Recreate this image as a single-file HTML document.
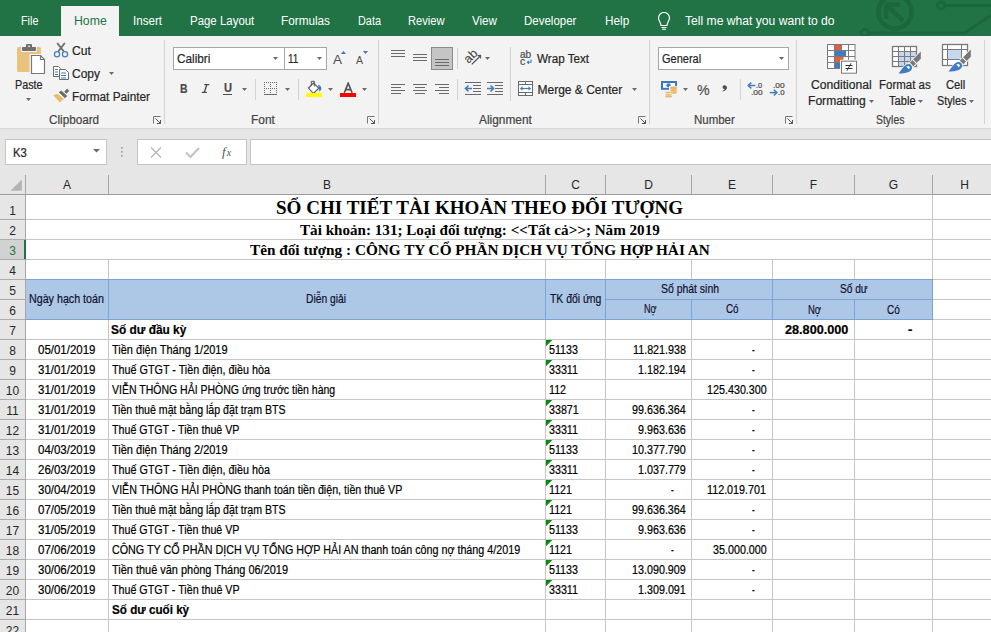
<!DOCTYPE html>
<html><head><meta charset="utf-8">
<style>
*{box-sizing:border-box}
html,body{margin:0;padding:0}
body{width:991px;height:632px;overflow:hidden;position:relative;background:#fff;font-family:"Liberation Sans",sans-serif;color:#262626}
.a{position:absolute}
.t{position:absolute;white-space:nowrap;line-height:1}
.ch{position:absolute;top:175px;height:19px;font-size:12px;color:#262626;text-align:center;line-height:19px}
.rh{position:absolute;left:0;width:25px;font-size:12px;color:#262626;text-align:center}
</style></head><body>
<div class="a" style="left:0px;top:0px;width:991px;height:36px;background:#217346"></div>
<svg class="a" style="left:840px;top:0px" width="151" height="36" viewBox="840 0 151 36"><circle cx="895" cy="12" r="16.5" fill="none" stroke="#1c663d" stroke-width="4.5"/><path d="M886 4.5H900M886 4.5V19M886.5 5L903 21" fill="none" stroke="#1c663d" stroke-width="4.5"/><circle cx="941" cy="5.5" r="3.6" fill="none" stroke="#1c663d" stroke-width="2.6"/><path d="M944.6 5.5H991" stroke="#1c663d" stroke-width="3"/><path d="M868 33H965L991 15" fill="none" stroke="#1c663d" stroke-width="3"/><circle cx="865" cy="33" r="3.6" fill="none" stroke="#1c663d" stroke-width="2.6"/></svg>
<div class="a" style="left:61px;top:6px;width:58px;height:30px;background:#f3f3f3"></div>
<div class="t" style="left:20.70px;top:15px;font-size:12.5px;color:#fff;font-family:'Liberation Sans',sans-serif;transform:scaleX(0.8641);transform-origin:0 0;">File</div>
<div class="t" style="left:73.60px;top:15px;font-size:12.5px;color:#217346;font-family:'Liberation Sans',sans-serif;transform:scaleX(0.9805);transform-origin:0 0;">Home</div>
<div class="t" style="left:132.80px;top:15px;font-size:12.5px;color:#fff;font-family:'Liberation Sans',sans-serif;transform:scaleX(0.9276);transform-origin:0 0;">Insert</div>
<div class="t" style="left:189.60px;top:15px;font-size:12.5px;color:#fff;font-family:'Liberation Sans',sans-serif;transform:scaleX(0.9160);transform-origin:0 0;">Page Layout</div>
<div class="t" style="left:281.00px;top:15px;font-size:12.5px;color:#fff;font-family:'Liberation Sans',sans-serif;transform:scaleX(0.9405);transform-origin:0 0;">Formulas</div>
<div class="t" style="left:357.70px;top:15px;font-size:12.5px;color:#fff;font-family:'Liberation Sans',sans-serif;transform:scaleX(0.8708);transform-origin:0 0;">Data</div>
<div class="t" style="left:408.40px;top:15px;font-size:12.5px;color:#fff;font-family:'Liberation Sans',sans-serif;transform:scaleX(0.8897);transform-origin:0 0;">Review</div>
<div class="t" style="left:471.90px;top:15px;font-size:12.5px;color:#fff;font-family:'Liberation Sans',sans-serif;transform:scaleX(0.9294);transform-origin:0 0;">View</div>
<div class="t" style="left:524.40px;top:15px;font-size:12.5px;color:#fff;font-family:'Liberation Sans',sans-serif;transform:scaleX(0.9197);transform-origin:0 0;">Developer</div>
<div class="t" style="left:604.60px;top:15px;font-size:12.5px;color:#fff;font-family:'Liberation Sans',sans-serif;transform:scaleX(0.9412);transform-origin:0 0;">Help</div>
<div class="t" style="left:684.60px;top:15px;font-size:12.5px;color:#fff;font-family:'Liberation Sans',sans-serif;transform:scaleX(0.9699);transform-origin:0 0;">Tell me what you want to do</div>
<svg class="a" style="left:656px;top:12px" width="16" height="20" viewBox="656 12 16 20"><path d="M661 25.5C661 22.5 658.5 21 658.5 18A5.5 5.5 0 0 1 669.5 18C669.5 21 667 22.5 667 25.5Z" fill="none" stroke="#fff" stroke-width="1.2"/><path d="M661.5 27.5H666.5M662 29.3H666" stroke="#fff" stroke-width="1.1"/></svg>
<div class="a" style="left:0px;top:36px;width:991px;height:92px;background:#f3f3f3"></div>
<div class="a" style="left:0px;top:128px;width:991px;height:1px;background:#d5d5d5"></div>
<div class="a" style="left:164px;top:40px;width:1px;height:84px;background:#d2d2d2"></div>
<div class="a" style="left:378px;top:40px;width:1px;height:84px;background:#d2d2d2"></div>
<div class="a" style="left:649px;top:40px;width:1px;height:84px;background:#d2d2d2"></div>
<div class="a" style="left:796px;top:40px;width:1px;height:84px;background:#d2d2d2"></div>
<div class="a" style="left:984px;top:40px;width:1px;height:84px;background:#d2d2d2"></div>
<div class="t" style="left:48.50px;top:114px;font-size:12px;color:#444;font-family:'Liberation Sans',sans-serif;transform:scaleX(0.9755);transform-origin:0 0;-webkit-text-stroke:0.2px #444;">Clipboard</div>
<div class="t" style="left:251.00px;top:114px;font-size:12px;color:#444;font-family:'Liberation Sans',sans-serif;transform:scaleX(0.9912);transform-origin:0 0;-webkit-text-stroke:0.2px #444;">Font</div>
<div class="t" style="left:479.00px;top:114px;font-size:12px;color:#444;font-family:'Liberation Sans',sans-serif;transform:scaleX(0.9894);transform-origin:0 0;-webkit-text-stroke:0.2px #444;">Alignment</div>
<div class="t" style="left:694.20px;top:114px;font-size:12px;color:#444;font-family:'Liberation Sans',sans-serif;transform:scaleX(0.9559);transform-origin:0 0;-webkit-text-stroke:0.2px #444;">Number</div>
<div class="t" style="left:876.00px;top:114px;font-size:12px;color:#444;font-family:'Liberation Sans',sans-serif;transform:scaleX(0.8691);transform-origin:0 0;-webkit-text-stroke:0.2px #444;">Styles</div>
<svg class="a" style="left:153px;top:116px" width="9" height="9" viewBox="153 116 9 9"><path d="M153.5 123.5V116.5H160.5" fill="none" stroke="#777" stroke-width="1"/><path d="M155.5 118.5L160.5 123.5M157 123.5H160.5V120" fill="none" stroke="#555" stroke-width="1"/></svg>
<svg class="a" style="left:367px;top:116px" width="9" height="9" viewBox="367 116 9 9"><path d="M367.5 123.5V116.5H374.5" fill="none" stroke="#777" stroke-width="1"/><path d="M369.5 118.5L374.5 123.5M371 123.5H374.5V120" fill="none" stroke="#555" stroke-width="1"/></svg>
<svg class="a" style="left:638px;top:116px" width="9" height="9" viewBox="638 116 9 9"><path d="M638.5 123.5V116.5H645.5" fill="none" stroke="#777" stroke-width="1"/><path d="M640.5 118.5L645.5 123.5M642 123.5H645.5V120" fill="none" stroke="#555" stroke-width="1"/></svg>
<svg class="a" style="left:785px;top:116px" width="9" height="9" viewBox="785 116 9 9"><path d="M785.5 123.5V116.5H792.5" fill="none" stroke="#777" stroke-width="1"/><path d="M787.5 118.5L792.5 123.5M789 123.5H792.5V120" fill="none" stroke="#555" stroke-width="1"/></svg>
<svg class="a" style="left:14px;top:40px" width="34" height="38" viewBox="14 40 34 38"><rect x="17" y="47" width="24" height="25" rx="1.5" fill="#eac27f"/><rect x="21" y="46" width="16" height="6" fill="#f3f3f3"/><rect x="22" y="47" width="14" height="4" rx="0.8" fill="#6f6f6f"/><rect x="26" y="44" width="6" height="4" rx="1" fill="#6f6f6f"/><rect x="28.2" y="45.5" width="1.6" height="1.6" fill="#f3f3f3"/><path d="M29.5 54H41L47 60V75H29.5Z" fill="#f3f3f3"/><path d="M31.5 55.5H40.5L44.5 59.5V73.5H31.5Z" fill="#fff" stroke="#787878" stroke-width="1.2"/><path d="M40.5 55.5V59.5H44.5" fill="none" stroke="#787878" stroke-width="1.2"/></svg>
<div class="t" style="left:15.40px;top:79px;font-size:12px;color:#262626;font-family:'Liberation Sans',sans-serif;transform:scaleX(0.8995);transform-origin:0 0;-webkit-text-stroke:0.2px #262626;">Paste</div>
<svg class="a" style="left:26px;top:98px" width="6" height="4"><path d="M0 0H5L2.5 3Z" fill="#6a6a6a"/></svg>
<svg class="a" style="left:52px;top:41px" width="18" height="17" viewBox="52 41 18 17"><path d="M57.2 43L63.8 51.5M64.8 43L58.2 51.5" stroke="#6a6a6a" stroke-width="1.8"/><circle cx="57" cy="54.2" r="2.6" fill="none" stroke="#4a7fc1" stroke-width="1.3"/><circle cx="65" cy="54.2" r="2.6" fill="none" stroke="#4a7fc1" stroke-width="1.3"/></svg>
<div class="t" style="left:72.00px;top:45px;font-size:12px;color:#262626;font-family:'Liberation Sans',sans-serif;transform:scaleX(1.0122);transform-origin:0 0;-webkit-text-stroke:0.2px #262626;">Cut</div>
<svg class="a" style="left:51px;top:64px" width="20" height="18" viewBox="51 64 20 18"><path d="M53.5 66.5H58.5L60.5 68.5V76.5H53.5Z" fill="#fff" stroke="#6d6d6d" stroke-width="1"/><path d="M55 69.5H58M55 72H58M55 74.5H58" stroke="#3f7bc0" stroke-width="1"/><path d="M59.5 69.5H65.5L68.5 72.5V79.5H59.5Z" fill="#fff" stroke="#6d6d6d" stroke-width="1"/><path d="M61 73H66M61 75.5H66M61 78H66" stroke="#3f7bc0" stroke-width="1"/></svg>
<div class="t" style="left:72.00px;top:68px;font-size:12px;color:#262626;font-family:'Liberation Sans',sans-serif;-webkit-text-stroke:0.2px #262626;">Copy</div>
<svg class="a" style="left:109px;top:72px" width="6" height="4"><path d="M0 0H5L2.5 3Z" fill="#6a6a6a"/></svg>
<svg class="a" style="left:51px;top:87px" width="20" height="18" viewBox="51 87 20 18"><path d="M53.2 95.3L57.6 93.8L63.8 98.8L60 102.6Z" fill="#e8bd6e"/><path d="M59.2 92.3L61.4 91.1L66.8 96.1L64.9 97.7Z" fill="#6a6a6a" stroke="#6a6a6a" stroke-width="0.8" stroke-linejoin="round"/><path d="M64.6 91.7L67.1 89L69 90.7L66.5 93.4Z" fill="#6a6a6a" stroke="#6a6a6a" stroke-width="0.6" stroke-linejoin="round"/></svg>
<div class="t" style="left:72.00px;top:91px;font-size:12px;color:#262626;font-family:'Liberation Sans',sans-serif;transform:scaleX(0.9829);transform-origin:0 0;-webkit-text-stroke:0.2px #262626;">Format Painter</div>
<div class="a" style="left:173px;top:47px;width:112px;height:23px;background:#fff;border:1px solid #a6a6a6"></div>
<div class="a" style="left:284px;top:47px;width:43px;height:23px;background:#fff;border:1px solid #a6a6a6"></div>
<div class="t" style="left:176.60px;top:53px;font-size:12px;color:#262626;font-family:'Liberation Sans',sans-serif;transform:scaleX(0.9821);transform-origin:0 0;-webkit-text-stroke:0.2px #262626;">Calibri</div>
<div class="t" style="left:287.60px;top:53px;font-size:12px;color:#262626;font-family:'Liberation Sans',sans-serif;transform:scaleX(0.8349);transform-origin:0 0;-webkit-text-stroke:0.2px #262626;">11</div>
<svg class="a" style="left:273px;top:57px" width="6" height="4"><path d="M0 0H5L2.5 3Z" fill="#6a6a6a"/></svg>
<svg class="a" style="left:316.5px;top:57px" width="6" height="4"><path d="M0 0H5L2.5 3Z" fill="#6a6a6a"/></svg>
<div class="t" style="left:333px;top:52.52px;font-size:13.5px;color:#505050;">A</div>
<svg class="a" style="left:340px;top:50px" width="8" height="5" viewBox="340 50 8 5"><path d="M341 54H346L343.5 51Z" fill="#3c78b9"/></svg>
<div class="t" style="left:356px;top:55.08px;font-size:10.5px;color:#505050;">A</div>
<svg class="a" style="left:362px;top:50px" width="8" height="5" viewBox="362 50 8 5"><path d="M363 51H368L365.5 54Z" fill="#3c78b9"/></svg>
<div class="t" style="left:179.70px;top:82px;font-size:13px;color:#4a4a4a;font-family:'Liberation Sans',sans-serif;font-weight:bold;transform:scaleX(0.7991);transform-origin:0 0;-webkit-text-stroke:0.2px #4a4a4a;">B</div>
<svg class="a" style="left:200px;top:82px" width="12" height="13" viewBox="200 82 12 13"><path d="M204.3 84.6H209.3M201.8 92.4H206.8M206.8 84.6L204.3 92.4" fill="none" stroke="#4a4a4a" stroke-width="1.4"/></svg>
<div class="t" style="left:223.50px;top:82px;font-size:12px;color:#4a4a4a;font-family:'Liberation Sans',sans-serif;font-weight:bold;transform:scaleX(0.9234);transform-origin:0 0;-webkit-text-stroke:0.2px #4a4a4a;">U</div>
<div class="a" style="left:223px;top:94px;width:9px;height:1px;background:#4a4a4a"></div>
<svg class="a" style="left:242px;top:88px" width="6" height="4"><path d="M0 0H5L2.5 3Z" fill="#6a6a6a"/></svg>
<div class="a" style="left:255px;top:79px;width:1px;height:21px;background:#d2d2d2"></div>
<svg class="a" style="left:263px;top:80px" width="16" height="16" viewBox="263 80 16 16"><g fill="#6a6a6a"><rect x="264" y="82" width="1" height="1"/><rect x="264" y="88" width="1" height="1"/><rect x="266" y="82" width="1" height="1"/><rect x="266" y="88" width="1" height="1"/><rect x="268" y="82" width="1" height="1"/><rect x="268" y="88" width="1" height="1"/><rect x="270" y="82" width="1" height="1"/><rect x="270" y="88" width="1" height="1"/><rect x="272" y="82" width="1" height="1"/><rect x="272" y="88" width="1" height="1"/><rect x="274" y="82" width="1" height="1"/><rect x="274" y="88" width="1" height="1"/><rect x="276" y="82" width="1" height="1"/><rect x="276" y="88" width="1" height="1"/><rect x="264" y="82" width="1" height="1"/><rect x="270" y="82" width="1" height="1"/><rect x="276" y="82" width="1" height="1"/><rect x="264" y="84" width="1" height="1"/><rect x="270" y="84" width="1" height="1"/><rect x="276" y="84" width="1" height="1"/><rect x="264" y="86" width="1" height="1"/><rect x="270" y="86" width="1" height="1"/><rect x="276" y="86" width="1" height="1"/><rect x="264" y="88" width="1" height="1"/><rect x="270" y="88" width="1" height="1"/><rect x="276" y="88" width="1" height="1"/><rect x="264" y="90" width="1" height="1"/><rect x="270" y="90" width="1" height="1"/><rect x="276" y="90" width="1" height="1"/><rect x="264" y="92" width="1" height="1"/><rect x="270" y="92" width="1" height="1"/><rect x="276" y="92" width="1" height="1"/></g><rect x="264" y="94" width="13" height="1" fill="#6a6a6a"/></svg>
<svg class="a" style="left:285px;top:88px" width="6" height="4"><path d="M0 0H5L2.5 3Z" fill="#6a6a6a"/></svg>
<div class="a" style="left:298px;top:79px;width:1px;height:21px;background:#d2d2d2"></div>
<svg class="a" style="left:304px;top:79px" width="20" height="19" viewBox="304 79 20 19"><path d="M308.5 88L313.5 83L318.8 88.2L313.5 93.5Z" fill="#fff" stroke="#555" stroke-width="1.1"/><path d="M311.3 85.2V81.3H314.3V86.5" fill="none" stroke="#555" stroke-width="1"/><path d="M318 84.8Q322 85.8 321.2 89.5L319.5 92L318.8 88.2Z" fill="#3f7bc0"/><rect x="306" y="93" width="16" height="4" fill="#ffff00"/></svg>
<svg class="a" style="left:328px;top:88px" width="6" height="4"><path d="M0 0H5L2.5 3Z" fill="#6a6a6a"/></svg>
<svg class="a" style="left:342px;top:82px" width="12" height="12" viewBox="342 82 12 12"><path d="M344.3 92.8L348.2 83.3L352.1 92.8M345.7 89.6H350.7" fill="none" stroke="#555" stroke-width="1.7"/></svg>
<div class="a" style="left:340px;top:93px;width:16px;height:4px;background:#ff0000"></div>
<svg class="a" style="left:362px;top:88px" width="6" height="4"><path d="M0 0H5L2.5 3Z" fill="#6a6a6a"/></svg>
<div class="a" style="left:431px;top:47px;width:22px;height:23px;background:#c5c5c5;border:1px solid #8a8a8a"></div>
<svg class="a" style="left:385px;top:40px" width="125" height="60" viewBox="385 40 125 60"><path d="M391 50.5H405" stroke="#6a6a6a" stroke-width="1"/><path d="M391 53.5H405" stroke="#6a6a6a" stroke-width="1"/><path d="M391 56.5H405" stroke="#6a6a6a" stroke-width="1"/><path d="M413 54.5H427" stroke="#6a6a6a" stroke-width="1"/><path d="M413 57.5H427" stroke="#6a6a6a" stroke-width="1"/><path d="M413 60.5H427" stroke="#6a6a6a" stroke-width="1"/><path d="M435 59.5H449" stroke="#6a6a6a" stroke-width="1"/><path d="M435 62.5H449" stroke="#6a6a6a" stroke-width="1"/><path d="M435 65.5H449" stroke="#6a6a6a" stroke-width="1"/><path d="M391 84.5H405" stroke="#6a6a6a" stroke-width="1"/><path d="M413 84.5H427" stroke="#6a6a6a" stroke-width="1"/><path d="M435 84.5H449" stroke="#6a6a6a" stroke-width="1"/><path d="M391 87.5H401" stroke="#6a6a6a" stroke-width="1"/><path d="M415 87.5H425" stroke="#6a6a6a" stroke-width="1"/><path d="M439 87.5H449" stroke="#6a6a6a" stroke-width="1"/><path d="M391 90.5H405" stroke="#6a6a6a" stroke-width="1"/><path d="M413 90.5H427" stroke="#6a6a6a" stroke-width="1"/><path d="M435 90.5H449" stroke="#6a6a6a" stroke-width="1"/><path d="M391 93.5H401" stroke="#6a6a6a" stroke-width="1"/><path d="M415 93.5H425" stroke="#6a6a6a" stroke-width="1"/><path d="M439 93.5H449" stroke="#6a6a6a" stroke-width="1"/><path d="M465 82.5H481" stroke="#6a6a6a" stroke-width="1"/><path d="M465 94.5H481" stroke="#6a6a6a" stroke-width="1"/><path d="M473 85.5H481" stroke="#6a6a6a" stroke-width="1"/><path d="M473 88.5H481" stroke="#6a6a6a" stroke-width="1"/><path d="M473 91.5H481" stroke="#6a6a6a" stroke-width="1"/><path d="M487 82.5H503" stroke="#6a6a6a" stroke-width="1"/><path d="M487 94.5H503" stroke="#6a6a6a" stroke-width="1"/><path d="M495 85.5H503" stroke="#6a6a6a" stroke-width="1"/><path d="M495 88.5H503" stroke="#6a6a6a" stroke-width="1"/><path d="M495 91.5H503" stroke="#6a6a6a" stroke-width="1"/><path d="M465.5 88.5H472M468.5 85.5L465.5 88.5L468.5 91.5" fill="none" stroke="#3f7bc0" stroke-width="1.6"/><path d="M487 88.5H493.5M490.5 85.5L493.5 88.5L490.5 91.5" fill="none" stroke="#3f7bc0" stroke-width="1.6"/></svg>
<div class="a" style="left:457px;top:48px;width:1px;height:21px;background:#d2d2d2"></div>
<div class="a" style="left:457px;top:79px;width:1px;height:21px;background:#d2d2d2"></div>
<div class="a" style="left:510px;top:47px;width:1px;height:54px;background:#d2d2d2"></div>
<div class="t" style="left:462.5px;top:50px;width:16px;height:13px;font-size:12.5px;color:#444;transform:rotate(-45deg);transform-origin:8px 6.5px;text-align:center">ab</div>
<svg class="a" style="left:468px;top:52px" width="16" height="16" viewBox="468 52 16 16"><path d="M471.8 64.4L479 57.2" fill="none" stroke="#555" stroke-width="1.3"/><path d="M481.2 54.8L481 59L477 55Z" fill="#555"/></svg>
<svg class="a" style="left:485px;top:57px" width="6" height="4"><path d="M0 0H5L2.5 3Z" fill="#6a6a6a"/></svg>
<div class="t" style="left:519.80px;top:49px;font-size:10.5px;color:#4a4a4a;font-family:'Liberation Sans',sans-serif;transform:scaleX(0.9592);transform-origin:0 0;-webkit-text-stroke:0.2px #4a4a4a;">ab</div>
<div class="t" style="left:520.10px;top:56px;font-size:10.5px;color:#4a4a4a;font-family:'Liberation Sans',sans-serif;transform:scaleX(0.9905);transform-origin:0 0;-webkit-text-stroke:0.2px #4a4a4a;">c</div>
<svg class="a" style="left:525px;top:58px" width="8" height="7" viewBox="525 58 8 7"><path d="M531 59.5V62.3H527.5M529 60.8L527.3 62.3L529 63.8" fill="none" stroke="#3f7bc0" stroke-width="1.1"/></svg>
<div class="t" style="left:537.00px;top:53px;font-size:12px;color:#262626;font-family:'Liberation Sans',sans-serif;transform:scaleX(0.9705);transform-origin:0 0;-webkit-text-stroke:0.2px #262626;">Wrap Text</div>
<svg class="a" style="left:516px;top:80px" width="19" height="18" viewBox="516 80 19 18"><rect x="518.5" y="81.5" width="14" height="14" fill="#fff" stroke="#6a6a6a" stroke-width="1"/><path d="M518.5 84.5H532.5M518.5 92.5H532.5M525.5 81.5V84.5M525.5 92.5V95.5" stroke="#6a6a6a" stroke-width="1"/><path d="M520.5 88.5H530.5" stroke="#3f7bc0" stroke-width="1.2"/><path d="M520 88.5L522.5 86.3V90.7Z M531 88.5L528.5 86.3V90.7Z" fill="#3f7bc0"/></svg>
<div class="t" style="left:537.50px;top:84px;font-size:12px;color:#262626;font-family:'Liberation Sans',sans-serif;-webkit-text-stroke:0.2px #262626;">Merge &amp; Center</div>
<svg class="a" style="left:632px;top:88px" width="6" height="4"><path d="M0 0H5L2.5 3Z" fill="#6a6a6a"/></svg>
<div class="a" style="left:658px;top:47px;width:131px;height:23px;background:#fff;border:1px solid #a6a6a6"></div>
<div class="t" style="left:661.60px;top:53px;font-size:12px;color:#262626;font-family:'Liberation Sans',sans-serif;transform:scaleX(0.9158);transform-origin:0 0;-webkit-text-stroke:0.2px #262626;">General</div>
<svg class="a" style="left:779px;top:57px" width="6" height="4"><path d="M0 0H5L2.5 3Z" fill="#6a6a6a"/></svg>
<svg class="a" style="left:659px;top:79px" width="22" height="20" viewBox="659 79 22 20"><rect x="662" y="82" width="14" height="6.8" fill="#fff" stroke="#3a78bd" stroke-width="2"/><circle cx="668.5" cy="85.3" r="2.1" fill="#3a78bd"/><path d="M669 86H678V98H663V90.5H669Z" fill="#f3f3f3"/><ellipse cx="673.6" cy="87.9" rx="3.6" ry="1.3" fill="#e8b86d"/><ellipse cx="673.6" cy="90.2" rx="3.6" ry="1.3" fill="#e8b86d"/><ellipse cx="673.6" cy="92.5" rx="3.6" ry="1.3" fill="#e8b86d"/><ellipse cx="668.6" cy="92.6" rx="3.6" ry="1.3" fill="#e8b86d" stroke="#f3f3f3" stroke-width="0.7"/><ellipse cx="668.6" cy="94.9" rx="3.6" ry="1.3" fill="#e8b86d" stroke="#f3f3f3" stroke-width="0.7"/><ellipse cx="668.6" cy="96.6" rx="3.4" ry="1" fill="#e8b86d"/></svg>
<svg class="a" style="left:683px;top:88px" width="6" height="4"><path d="M0 0H5L2.5 3Z" fill="#6a6a6a"/></svg>
<div class="t" style="left:697.20px;top:82px;font-size:15px;color:#505050;font-family:'Liberation Sans',sans-serif;transform:scaleX(0.9449);transform-origin:0 0;-webkit-text-stroke:0.2px #505050;">%</div>
<svg class="a" style="left:720px;top:84px" width="9" height="9" viewBox="720 84 9 9"><path d="M724.2 85.3C726 85.3 727 86.3 727 87.6C727 89.6 725.3 91.2 722.6 91.6L722.4 90.8C723.8 90.3 724.6 89.6 724.6 89C723.4 89 722.6 88.3 722.6 87.2C722.6 86.1 723.3 85.3 724.2 85.3Z" fill="#505050"/></svg>
<div class="a" style="left:740px;top:79px;width:1px;height:21px;background:#d2d2d2"></div>
<div class="t" style="left:756.00px;top:82px;font-size:8px;color:#444;font-family:'Liberation Sans',sans-serif;transform:scaleX(0.9143);transform-origin:0 0;-webkit-text-stroke:0.2px #444;">.0</div>
<div class="t" style="left:750.60px;top:89px;font-size:8px;color:#444;font-family:'Liberation Sans',sans-serif;transform:scaleX(1.0342);transform-origin:0 0;-webkit-text-stroke:0.2px #444;">.00</div>
<svg class="a" style="left:747px;top:82px" width="10" height="8" viewBox="747 82 10 8"><path d="M748.5 85.5H755.3" stroke="#3f7bc0" stroke-width="1.5"/><path d="M751.3 82.6L748.2 85.5L751.3 88.4" fill="none" stroke="#3f7bc0" stroke-width="1.5"/></svg>
<div class="t" style="left:772.50px;top:82px;font-size:8px;color:#444;font-family:'Liberation Sans',sans-serif;transform:scaleX(1.0432);transform-origin:0 0;-webkit-text-stroke:0.2px #444;">.00</div>
<div class="t" style="left:777.60px;top:89px;font-size:8px;color:#444;font-family:'Liberation Sans',sans-serif;transform:scaleX(0.9742);transform-origin:0 0;-webkit-text-stroke:0.2px #444;">.0</div>
<svg class="a" style="left:769px;top:89px" width="10" height="8" viewBox="769 89 10 8"><path d="M769.8 92.6H776.4" stroke="#3f7bc0" stroke-width="1.5"/><path d="M773.9 89.7L776.9 92.6L773.9 95.5" fill="none" stroke="#3f7bc0" stroke-width="1.5"/></svg>
<svg class="a" style="left:825px;top:42px" width="35" height="34" viewBox="825 42 35 34"><rect x="827.5" y="44.5" width="27.5" height="24" fill="#fff" stroke="#7a7a7a"/><path d="M834.5 44.5V68.5M841.5 44.5V68.5M848.5 44.5V68.5M827.5 50.5H855M827.5 56.5H855M827.5 62.5H855" stroke="#7a7a7a" stroke-width="1"/><rect x="835" y="45" width="6" height="5" fill="#e0603c"/><rect x="835" y="51" width="11" height="5" fill="#3f7bc0"/><rect x="835" y="57" width="8.5" height="5" fill="#e0603c"/><rect x="835" y="63" width="6" height="5" fill="#3f7bc0"/><rect x="840" y="59.7" width="18" height="15" fill="#f3f3f3"/><rect x="841.5" y="61.2" width="15" height="12" fill="#fff" stroke="#7a7a7a"/><path d="M845.5 65.5H852.5M845.5 68.5H852.5M851 63.3L847 70.7" stroke="#333" stroke-width="1"/></svg>
<svg class="a" style="left:888px;top:42px" width="38" height="34" viewBox="888 42 38 34"><rect x="892.5" y="46.5" width="24" height="20" fill="#fff" stroke="#7a7a7a"/><rect x="898.5" y="51.5" width="18" height="15" fill="#c5d8ef"/><path d="M898.5 46.5V66.5M904.5 46.5V66.5M910.5 46.5V66.5M892.5 51.5H916.5M892.5 56.5H916.5M892.5 61.5H916.5" stroke="#7a7a7a" stroke-width="1"/><rect x="892.5" y="46.5" width="24" height="20" fill="none" stroke="#7a7a7a" stroke-width="1.3"/><path d="M920.80 51.50L920.80 58.80L913.30 66.30L909.80 62.80Z" fill="#777" stroke="#f3f3f3" stroke-width="1.6" paint-order="stroke"/><path d="M912.20 59.20L917.20 64.20" stroke="#f3f3f3" stroke-width="1.1"/><path d="M898.60 73.60C901.00 70.50 903.50 66.50 906.30 64.60C909.30 62.80 912.40 64.80 912.00 68.20C911.60 71.60 906.00 73.60 898.60 73.60Z" fill="#3f7bc0" stroke="#f3f3f3" stroke-width="1.4" paint-order="stroke"/><path d="M906.30 66.60C907.50 65.50 909.50 65.60 910.00 67.60L908.80 69.30Z" fill="#fff"/></svg>
<svg class="a" style="left:938px;top:40px" width="38" height="34" viewBox="938 40 38 34"><rect x="942.5" y="44.5" width="25" height="21" fill="#fff" stroke="#7a7a7a"/><rect x="948" y="50" width="13.5" height="9.5" fill="#c5d8ef"/><path d="M942.5 49.5H967.5M942.5 59.5H967.5M947.5 44.5V65.5M961.5 44.5V65.5" stroke="#7a7a7a" stroke-width="1"/><rect x="942.5" y="44.5" width="25" height="21" fill="none" stroke="#7a7a7a" stroke-width="1.3"/><path d="M970.80 49.50L970.80 56.80L963.30 64.30L959.80 60.80Z" fill="#777" stroke="#f3f3f3" stroke-width="1.6" paint-order="stroke"/><path d="M962.20 57.20L967.20 62.20" stroke="#f3f3f3" stroke-width="1.1"/><path d="M948.60 71.60C951.00 68.50 953.50 64.50 956.30 62.60C959.30 60.80 962.40 62.80 962.00 66.20C961.60 69.60 956.00 71.60 948.60 71.60Z" fill="#3f7bc0" stroke="#f3f3f3" stroke-width="1.4" paint-order="stroke"/><path d="M956.30 64.60C957.50 63.50 959.50 63.60 960.00 65.60L958.80 67.30Z" fill="#fff"/></svg>
<div class="t" style="left:810.60px;top:79px;font-size:12px;color:#262626;font-family:'Liberation Sans',sans-serif;transform:scaleX(1.0111);transform-origin:0 0;-webkit-text-stroke:0.2px #262626;">Conditional</div>
<div class="t" style="left:807.70px;top:95px;font-size:12px;color:#262626;font-family:'Liberation Sans',sans-serif;transform:scaleX(1.0079);transform-origin:0 0;-webkit-text-stroke:0.2px #262626;">Formatting</div>
<svg class="a" style="left:869px;top:99.5px" width="6" height="4"><path d="M0 0H5L2.5 3Z" fill="#6a6a6a"/></svg>
<div class="t" style="left:879.40px;top:79px;font-size:12px;color:#262626;font-family:'Liberation Sans',sans-serif;transform:scaleX(0.9572);transform-origin:0 0;-webkit-text-stroke:0.2px #262626;">Format as</div>
<div class="t" style="left:888.70px;top:95px;font-size:12px;color:#262626;font-family:'Liberation Sans',sans-serif;transform:scaleX(0.9271);transform-origin:0 0;-webkit-text-stroke:0.2px #262626;">Table</div>
<svg class="a" style="left:918.3px;top:99.5px" width="6" height="4"><path d="M0 0H5L2.5 3Z" fill="#6a6a6a"/></svg>
<div class="t" style="left:945.50px;top:79px;font-size:12px;color:#262626;font-family:'Liberation Sans',sans-serif;transform:scaleX(0.9334);transform-origin:0 0;-webkit-text-stroke:0.2px #262626;">Cell</div>
<div class="t" style="left:936.50px;top:95px;font-size:12px;color:#262626;font-family:'Liberation Sans',sans-serif;transform:scaleX(0.8967);transform-origin:0 0;-webkit-text-stroke:0.2px #262626;">Styles</div>
<svg class="a" style="left:969px;top:99.5px" width="6" height="4"><path d="M0 0H5L2.5 3Z" fill="#6a6a6a"/></svg>
<div class="a" style="left:0px;top:129px;width:991px;height:46px;background:#e6e6e6"></div>
<div class="a" style="left:5px;top:139px;width:102px;height:26px;background:#fff;border:1px solid #c6c6c6"></div>
<div class="t" style="left:12.50px;top:147px;font-size:12px;color:#262626;font-family:'Liberation Sans',sans-serif;transform:scaleX(0.9471);transform-origin:0 0;-webkit-text-stroke:0.2px #262626;">K3</div>
<svg class="a" style="left:92px;top:148px" width="9" height="6" viewBox="92 148 9 6"><path d="M93 149H100L96.5 152.5Z" fill="#6a6a6a"/></svg>
<svg class="a" style="left:120px;top:146px" width="4" height="12" viewBox="120 146 4 12"><rect x="121" y="147" width="1.6" height="1.6" fill="#9a9a9a"/><rect x="121" y="151" width="1.6" height="1.6" fill="#9a9a9a"/><rect x="121" y="155" width="1.6" height="1.6" fill="#9a9a9a"/></svg>
<div class="a" style="left:137px;top:139px;width:110px;height:26px;background:#fff;border:1px solid #c6c6c6"></div>
<svg class="a" style="left:148px;top:145px" width="54" height="14" viewBox="148 145 54 14"><path d="M151 147.5L161 157.5M161 147.5L151 157.5" stroke="#b5b5b5" stroke-width="1.3"/><path d="M186 152.5L190.5 157L199 148" fill="none" stroke="#c2c2c2" stroke-width="2"/></svg>
<div class="t" style="left:222px;top:144.95px;font-size:13px;color:#555;font-family:'Liberation Serif',serif;font-style:italic">f</div>
<div class="t" style="left:226.8px;top:147.50px;font-size:10px;color:#555;font-family:'Liberation Serif',serif;font-style:italic">x</div>
<div class="a" style="left:250px;top:139px;width:745px;height:26px;background:#fff;border:1px solid #c6c6c6"></div>
<div class="a" style="left:0px;top:175px;width:991px;height:457px;background:#fff"></div>
<div class="a" style="left:0px;top:175px;width:991px;height:19px;background:#e6e6e6"></div>
<svg class="a" style="left:0;top:175px" width="25" height="19"><path d="M10.5 15.7 L21.8 4.6 L21.8 15.7 Z" fill="#b4b4b4"/></svg>
<div class="ch" style="left:26px;width:82px;top:179px;line-height:1;height:auto">A</div>
<div class="ch" style="left:109px;width:436px;top:179px;line-height:1;height:auto">B</div>
<div class="ch" style="left:546px;width:59px;top:179px;line-height:1;height:auto">C</div>
<div class="ch" style="left:606px;width:85px;top:179px;line-height:1;height:auto">D</div>
<div class="ch" style="left:692px;width:80px;top:179px;line-height:1;height:auto">E</div>
<div class="ch" style="left:773px;width:81px;top:179px;line-height:1;height:auto">F</div>
<div class="ch" style="left:855px;width:77px;top:179px;line-height:1;height:auto">G</div>
<div class="ch" style="left:933px;width:63px;top:179px;line-height:1;height:auto">H</div>
<div class="a" style="left:25px;top:175px;width:1px;height:19px;background:#a6a6a6"></div>
<div class="a" style="left:108px;top:175px;width:1px;height:19px;background:#a6a6a6"></div>
<div class="a" style="left:545px;top:175px;width:1px;height:19px;background:#a6a6a6"></div>
<div class="a" style="left:605px;top:175px;width:1px;height:19px;background:#a6a6a6"></div>
<div class="a" style="left:691px;top:175px;width:1px;height:19px;background:#a6a6a6"></div>
<div class="a" style="left:772px;top:175px;width:1px;height:19px;background:#a6a6a6"></div>
<div class="a" style="left:854px;top:175px;width:1px;height:19px;background:#a6a6a6"></div>
<div class="a" style="left:932px;top:175px;width:1px;height:19px;background:#a6a6a6"></div>
<div class="a" style="left:0px;top:195px;width:25px;height:437px;background:#e6e6e6"></div>
<div class="a" style="left:0px;top:240px;width:25px;height:19px;background:#d2d2d2"></div>
<div class="a" style="left:26px;top:219px;width:965px;height:1px;background:#c6c6c6"></div>
<div class="a" style="left:0px;top:219px;width:25px;height:1px;background:#acacac"></div>
<div class="a" style="left:26px;top:239px;width:965px;height:1px;background:#c6c6c6"></div>
<div class="a" style="left:0px;top:239px;width:25px;height:1px;background:#acacac"></div>
<div class="a" style="left:26px;top:259px;width:965px;height:1px;background:#c6c6c6"></div>
<div class="a" style="left:0px;top:259px;width:25px;height:1px;background:#acacac"></div>
<div class="a" style="left:26px;top:279px;width:965px;height:1px;background:#c6c6c6"></div>
<div class="a" style="left:0px;top:279px;width:25px;height:1px;background:#acacac"></div>
<div class="a" style="left:26px;top:299px;width:965px;height:1px;background:#c6c6c6"></div>
<div class="a" style="left:0px;top:299px;width:25px;height:1px;background:#acacac"></div>
<div class="a" style="left:26px;top:319px;width:965px;height:1px;background:#c6c6c6"></div>
<div class="a" style="left:0px;top:319px;width:25px;height:1px;background:#acacac"></div>
<div class="a" style="left:26px;top:339px;width:965px;height:1px;background:#c6c6c6"></div>
<div class="a" style="left:0px;top:339px;width:25px;height:1px;background:#acacac"></div>
<div class="a" style="left:26px;top:359px;width:965px;height:1px;background:#c6c6c6"></div>
<div class="a" style="left:0px;top:359px;width:25px;height:1px;background:#acacac"></div>
<div class="a" style="left:26px;top:379px;width:965px;height:1px;background:#c6c6c6"></div>
<div class="a" style="left:0px;top:379px;width:25px;height:1px;background:#acacac"></div>
<div class="a" style="left:26px;top:399px;width:965px;height:1px;background:#c6c6c6"></div>
<div class="a" style="left:0px;top:399px;width:25px;height:1px;background:#acacac"></div>
<div class="a" style="left:26px;top:419px;width:965px;height:1px;background:#c6c6c6"></div>
<div class="a" style="left:0px;top:419px;width:25px;height:1px;background:#acacac"></div>
<div class="a" style="left:26px;top:439px;width:965px;height:1px;background:#c6c6c6"></div>
<div class="a" style="left:0px;top:439px;width:25px;height:1px;background:#acacac"></div>
<div class="a" style="left:26px;top:459px;width:965px;height:1px;background:#c6c6c6"></div>
<div class="a" style="left:0px;top:459px;width:25px;height:1px;background:#acacac"></div>
<div class="a" style="left:26px;top:479px;width:965px;height:1px;background:#c6c6c6"></div>
<div class="a" style="left:0px;top:479px;width:25px;height:1px;background:#acacac"></div>
<div class="a" style="left:26px;top:499px;width:965px;height:1px;background:#c6c6c6"></div>
<div class="a" style="left:0px;top:499px;width:25px;height:1px;background:#acacac"></div>
<div class="a" style="left:26px;top:519px;width:965px;height:1px;background:#c6c6c6"></div>
<div class="a" style="left:0px;top:519px;width:25px;height:1px;background:#acacac"></div>
<div class="a" style="left:26px;top:539px;width:965px;height:1px;background:#c6c6c6"></div>
<div class="a" style="left:0px;top:539px;width:25px;height:1px;background:#acacac"></div>
<div class="a" style="left:26px;top:559px;width:965px;height:1px;background:#c6c6c6"></div>
<div class="a" style="left:0px;top:559px;width:25px;height:1px;background:#acacac"></div>
<div class="a" style="left:26px;top:579px;width:965px;height:1px;background:#c6c6c6"></div>
<div class="a" style="left:0px;top:579px;width:25px;height:1px;background:#acacac"></div>
<div class="a" style="left:26px;top:599px;width:965px;height:1px;background:#c6c6c6"></div>
<div class="a" style="left:0px;top:599px;width:25px;height:1px;background:#acacac"></div>
<div class="a" style="left:26px;top:619px;width:965px;height:1px;background:#c6c6c6"></div>
<div class="a" style="left:0px;top:619px;width:25px;height:1px;background:#acacac"></div>
<div class="a" style="left:108px;top:260px;width:1px;height:372px;background:#c6c6c6"></div>
<div class="a" style="left:545px;top:260px;width:1px;height:372px;background:#c6c6c6"></div>
<div class="a" style="left:605px;top:260px;width:1px;height:372px;background:#c6c6c6"></div>
<div class="a" style="left:691px;top:260px;width:1px;height:372px;background:#c6c6c6"></div>
<div class="a" style="left:772px;top:260px;width:1px;height:372px;background:#c6c6c6"></div>
<div class="a" style="left:854px;top:260px;width:1px;height:372px;background:#c6c6c6"></div>
<div class="a" style="left:932px;top:195px;width:1px;height:437px;background:#c6c6c6"></div>
<div class="rh" style="top:205px;line-height:1;color:#262626">1</div>
<div class="rh" style="top:225px;line-height:1;color:#262626">2</div>
<div class="rh" style="top:245px;line-height:1;color:#217346">3</div>
<div class="rh" style="top:265px;line-height:1;color:#262626">4</div>
<div class="rh" style="top:285px;line-height:1;color:#262626">5</div>
<div class="rh" style="top:305px;line-height:1;color:#262626">6</div>
<div class="rh" style="top:325px;line-height:1;color:#262626">7</div>
<div class="rh" style="top:345px;line-height:1;color:#262626">8</div>
<div class="rh" style="top:365px;line-height:1;color:#262626">9</div>
<div class="rh" style="top:385px;line-height:1;color:#262626">10</div>
<div class="rh" style="top:405px;line-height:1;color:#262626">11</div>
<div class="rh" style="top:425px;line-height:1;color:#262626">12</div>
<div class="rh" style="top:445px;line-height:1;color:#262626">13</div>
<div class="rh" style="top:465px;line-height:1;color:#262626">14</div>
<div class="rh" style="top:485px;line-height:1;color:#262626">15</div>
<div class="rh" style="top:505px;line-height:1;color:#262626">16</div>
<div class="rh" style="top:525px;line-height:1;color:#262626">17</div>
<div class="rh" style="top:545px;line-height:1;color:#262626">18</div>
<div class="rh" style="top:565px;line-height:1;color:#262626">19</div>
<div class="rh" style="top:585px;line-height:1;color:#262626">20</div>
<div class="rh" style="top:605px;line-height:1;color:#262626">21</div>
<div class="rh" style="top:625px;line-height:1;color:#262626">22</div>
<div class="a" style="left:0px;top:194px;width:991px;height:1px;background:#9c9c9c"></div>
<div class="a" style="left:25px;top:195px;width:1px;height:437px;background:#a6a6a6"></div>
<div class="a" style="left:24px;top:240px;width:2px;height:19px;background:#217346"></div>
<div class="a" style="left:26px;top:280px;width:906px;height:39px;background:#adc8e6"></div>
<div class="a" style="left:26px;top:279px;width:907px;height:1px;background:#7ba3d4"></div>
<div class="a" style="left:26px;top:319px;width:907px;height:1px;background:#7ba3d4"></div>
<div class="a" style="left:606px;top:299px;width:326px;height:1px;background:#7ba3d4"></div>
<div class="a" style="left:108px;top:279px;width:1px;height:41px;background:#7ba3d4"></div>
<div class="a" style="left:545px;top:279px;width:1px;height:41px;background:#7ba3d4"></div>
<div class="a" style="left:605px;top:279px;width:1px;height:41px;background:#7ba3d4"></div>
<div class="a" style="left:772px;top:279px;width:1px;height:41px;background:#7ba3d4"></div>
<div class="a" style="left:932px;top:279px;width:1px;height:41px;background:#7ba3d4"></div>
<div class="a" style="left:691px;top:299px;width:1px;height:21px;background:#7ba3d4"></div>
<div class="a" style="left:854px;top:299px;width:1px;height:21px;background:#7ba3d4"></div>
<div class="t" style="left:275.90px;top:198px;font-size:19px;color:#000;font-family:'Liberation Serif',serif;font-weight:bold;transform:scaleX(1.0034);transform-origin:0 0;">SỔ CHI TIẾT TÀI KHOẢN THEO ĐỐI TƯỢNG</div>
<div class="t" style="left:299.50px;top:223px;font-size:15px;color:#000;font-family:'Liberation Serif',serif;font-weight:bold;transform:scaleX(1.0080);transform-origin:0 0;">Tài khoản: 131; Loại đối tượng: &lt;&lt;Tất cả&gt;&gt;; Năm 2019</div>
<div class="t" style="left:249.80px;top:243px;font-size:15px;color:#000;font-family:'Liberation Serif',serif;font-weight:bold;transform:scaleX(1.0168);transform-origin:0 0;">Tên đối tượng : CÔNG TY CỔ PHẦN DỊCH VỤ TỔNG HỢP HẢI AN</div>
<div class="t" style="left:29.10px;top:293px;font-size:12.5px;color:#101030;font-family:'Liberation Sans',sans-serif;transform:scaleX(0.8554);transform-origin:0 0;-webkit-text-stroke:0.2px #101030;">Ngày hạch toán</div>
<div class="t" style="left:306.10px;top:293px;font-size:12.5px;color:#101030;font-family:'Liberation Sans',sans-serif;transform:scaleX(0.8224);transform-origin:0 0;-webkit-text-stroke:0.2px #101030;">Diễn giải</div>
<div class="t" style="left:549.70px;top:293px;font-size:12.5px;color:#101030;font-family:'Liberation Sans',sans-serif;transform:scaleX(0.8307);transform-origin:0 0;-webkit-text-stroke:0.2px #101030;">TK đối ứng</div>
<div class="t" style="left:661.20px;top:283px;font-size:12.5px;color:#101030;font-family:'Liberation Sans',sans-serif;transform:scaleX(0.8345);transform-origin:0 0;-webkit-text-stroke:0.2px #101030;">Số phát sinh</div>
<div class="t" style="left:643.50px;top:303px;font-size:12.5px;color:#101030;font-family:'Liberation Sans',sans-serif;transform:scaleX(0.7257);transform-origin:0 0;-webkit-text-stroke:0.2px #101030;">Nợ</div>
<div class="t" style="left:726.30px;top:303px;font-size:12.5px;color:#101030;font-family:'Liberation Sans',sans-serif;transform:scaleX(0.7887);transform-origin:0 0;-webkit-text-stroke:0.2px #101030;">Có</div>
<div class="t" style="left:840.00px;top:283px;font-size:12.5px;color:#101030;font-family:'Liberation Sans',sans-serif;transform:scaleX(0.8097);transform-origin:0 0;-webkit-text-stroke:0.2px #101030;">Số dư</div>
<div class="t" style="left:808.20px;top:304px;font-size:12.5px;color:#101030;font-family:'Liberation Sans',sans-serif;transform:scaleX(0.7547);transform-origin:0 0;-webkit-text-stroke:0.2px #101030;">Nợ</div>
<div class="t" style="left:887.30px;top:304px;font-size:12.5px;color:#101030;font-family:'Liberation Sans',sans-serif;transform:scaleX(0.8013);transform-origin:0 0;-webkit-text-stroke:0.2px #101030;">Có</div>
<div class="t" style="left:111.30px;top:324px;font-size:12.5px;color:#000;font-family:'Liberation Sans',sans-serif;font-weight:bold;transform:scaleX(0.9508);transform-origin:0 0;-webkit-text-stroke:0.2px #000;">Số dư đầu kỳ</div>
<div class="t" style="left:784.60px;top:324px;font-size:12.5px;color:#000;font-family:'Liberation Sans',sans-serif;font-weight:bold;transform:scaleX(1.0134);transform-origin:0 0;-webkit-text-stroke:0.2px #000;">28.800.000</div>
<div class="t" style="left:908.00px;top:324px;font-size:12.5px;color:#000;font-family:'Liberation Sans',sans-serif;font-weight:bold;transform:scaleX(1.0571);transform-origin:0 0;-webkit-text-stroke:0.2px #000;">-</div>
<div class="t" style="left:38.30px;top:344px;font-size:12.5px;color:#000;font-family:'Liberation Sans',sans-serif;transform:scaleX(0.9175);transform-origin:0 0;-webkit-text-stroke:0.2px #000;">05/01/2019</div>
<div class="t" style="left:111.70px;top:344px;font-size:12.5px;color:#000;font-family:'Liberation Sans',sans-serif;transform:scaleX(0.8801);transform-origin:0 0;-webkit-text-stroke:0.2px #000;">Tiền điện Tháng 1/2019</div>
<div class="t" style="left:548.50px;top:344px;font-size:12.5px;color:#000;font-family:'Liberation Sans',sans-serif;transform:scaleX(0.8570);transform-origin:0 0;-webkit-text-stroke:0.2px #000;">51133</div>
<div class="t" style="left:632.60px;top:344px;font-size:12.5px;color:#000;font-family:'Liberation Sans',sans-serif;transform:scaleX(0.8599);transform-origin:0 0;-webkit-text-stroke:0.2px #000;">11.821.938</div>
<div class="t" style="left:752.30px;top:344px;font-size:12.5px;color:#000;font-family:'Liberation Sans',sans-serif;transform:scaleX(0.6486);transform-origin:0 0;-webkit-text-stroke:0.2px #000;">-</div>
<svg class="a" style="left:546px;top:340px" width="7" height="7"><path d="M0 0H6.3L0 6.3Z" fill="#008a0e"/></svg>
<div class="t" style="left:38.30px;top:364px;font-size:12.5px;color:#000;font-family:'Liberation Sans',sans-serif;transform:scaleX(0.9175);transform-origin:0 0;-webkit-text-stroke:0.2px #000;">31/01/2019</div>
<div class="t" style="left:111.70px;top:364px;font-size:12.5px;color:#000;font-family:'Liberation Sans',sans-serif;transform:scaleX(0.8618);transform-origin:0 0;-webkit-text-stroke:0.2px #000;">Thuế GTGT - Tiền điện, điều hòa</div>
<div class="t" style="left:548.50px;top:364px;font-size:12.5px;color:#000;font-family:'Liberation Sans',sans-serif;transform:scaleX(0.8570);transform-origin:0 0;-webkit-text-stroke:0.2px #000;">33311</div>
<div class="t" style="left:637.78px;top:364px;font-size:12.5px;color:#000;font-family:'Liberation Sans',sans-serif;transform:scaleX(0.8599);transform-origin:0 0;-webkit-text-stroke:0.2px #000;">1.182.194</div>
<div class="t" style="left:752.30px;top:364px;font-size:12.5px;color:#000;font-family:'Liberation Sans',sans-serif;transform:scaleX(0.6486);transform-origin:0 0;-webkit-text-stroke:0.2px #000;">-</div>
<svg class="a" style="left:546px;top:360px" width="7" height="7"><path d="M0 0H6.3L0 6.3Z" fill="#008a0e"/></svg>
<div class="t" style="left:38.30px;top:384px;font-size:12.5px;color:#000;font-family:'Liberation Sans',sans-serif;transform:scaleX(0.9175);transform-origin:0 0;-webkit-text-stroke:0.2px #000;">31/01/2019</div>
<div class="t" style="left:111.70px;top:384px;font-size:12.5px;color:#000;font-family:'Liberation Sans',sans-serif;transform:scaleX(0.8399);transform-origin:0 0;-webkit-text-stroke:0.2px #000;">VIỄN THÔNG HẢI PHÒNG ứng trước tiền hàng</div>
<div class="t" style="left:548.50px;top:384px;font-size:12.5px;color:#000;font-family:'Liberation Sans',sans-serif;transform:scaleX(0.8570);transform-origin:0 0;-webkit-text-stroke:0.2px #000;">112</div>
<div class="t" style="left:706.53px;top:384px;font-size:12.5px;color:#000;font-family:'Liberation Sans',sans-serif;transform:scaleX(0.8599);transform-origin:0 0;-webkit-text-stroke:0.2px #000;">125.430.300</div>
<div class="t" style="left:38.30px;top:404px;font-size:12.5px;color:#000;font-family:'Liberation Sans',sans-serif;transform:scaleX(0.9175);transform-origin:0 0;-webkit-text-stroke:0.2px #000;">31/01/2019</div>
<div class="t" style="left:111.70px;top:404px;font-size:12.5px;color:#000;font-family:'Liberation Sans',sans-serif;transform:scaleX(0.8489);transform-origin:0 0;-webkit-text-stroke:0.2px #000;">Tiền thuê mặt bằng lắp đặt trạm BTS</div>
<div class="t" style="left:548.50px;top:404px;font-size:12.5px;color:#000;font-family:'Liberation Sans',sans-serif;transform:scaleX(0.8570);transform-origin:0 0;-webkit-text-stroke:0.2px #000;">33871</div>
<div class="t" style="left:631.80px;top:404px;font-size:12.5px;color:#000;font-family:'Liberation Sans',sans-serif;transform:scaleX(0.8599);transform-origin:0 0;-webkit-text-stroke:0.2px #000;">99.636.364</div>
<div class="t" style="left:752.30px;top:404px;font-size:12.5px;color:#000;font-family:'Liberation Sans',sans-serif;transform:scaleX(0.6486);transform-origin:0 0;-webkit-text-stroke:0.2px #000;">-</div>
<svg class="a" style="left:546px;top:400px" width="7" height="7"><path d="M0 0H6.3L0 6.3Z" fill="#008a0e"/></svg>
<div class="t" style="left:38.30px;top:424px;font-size:12.5px;color:#000;font-family:'Liberation Sans',sans-serif;transform:scaleX(0.9175);transform-origin:0 0;-webkit-text-stroke:0.2px #000;">31/01/2019</div>
<div class="t" style="left:111.70px;top:424px;font-size:12.5px;color:#000;font-family:'Liberation Sans',sans-serif;transform:scaleX(0.8549);transform-origin:0 0;-webkit-text-stroke:0.2px #000;">Thuế GTGT - Tiền thuê VP</div>
<div class="t" style="left:548.50px;top:424px;font-size:12.5px;color:#000;font-family:'Liberation Sans',sans-serif;transform:scaleX(0.8570);transform-origin:0 0;-webkit-text-stroke:0.2px #000;">33311</div>
<div class="t" style="left:637.78px;top:424px;font-size:12.5px;color:#000;font-family:'Liberation Sans',sans-serif;transform:scaleX(0.8599);transform-origin:0 0;-webkit-text-stroke:0.2px #000;">9.963.636</div>
<div class="t" style="left:752.30px;top:424px;font-size:12.5px;color:#000;font-family:'Liberation Sans',sans-serif;transform:scaleX(0.6486);transform-origin:0 0;-webkit-text-stroke:0.2px #000;">-</div>
<svg class="a" style="left:546px;top:420px" width="7" height="7"><path d="M0 0H6.3L0 6.3Z" fill="#008a0e"/></svg>
<div class="t" style="left:38.30px;top:444px;font-size:12.5px;color:#000;font-family:'Liberation Sans',sans-serif;transform:scaleX(0.9175);transform-origin:0 0;-webkit-text-stroke:0.2px #000;">04/03/2019</div>
<div class="t" style="left:111.70px;top:444px;font-size:12.5px;color:#000;font-family:'Liberation Sans',sans-serif;transform:scaleX(0.8801);transform-origin:0 0;-webkit-text-stroke:0.2px #000;">Tiền điện Tháng 2/2019</div>
<div class="t" style="left:548.50px;top:444px;font-size:12.5px;color:#000;font-family:'Liberation Sans',sans-serif;transform:scaleX(0.8570);transform-origin:0 0;-webkit-text-stroke:0.2px #000;">51133</div>
<div class="t" style="left:631.80px;top:444px;font-size:12.5px;color:#000;font-family:'Liberation Sans',sans-serif;transform:scaleX(0.8599);transform-origin:0 0;-webkit-text-stroke:0.2px #000;">10.377.790</div>
<div class="t" style="left:752.30px;top:444px;font-size:12.5px;color:#000;font-family:'Liberation Sans',sans-serif;transform:scaleX(0.6486);transform-origin:0 0;-webkit-text-stroke:0.2px #000;">-</div>
<svg class="a" style="left:546px;top:440px" width="7" height="7"><path d="M0 0H6.3L0 6.3Z" fill="#008a0e"/></svg>
<div class="t" style="left:38.30px;top:464px;font-size:12.5px;color:#000;font-family:'Liberation Sans',sans-serif;transform:scaleX(0.9175);transform-origin:0 0;-webkit-text-stroke:0.2px #000;">26/03/2019</div>
<div class="t" style="left:111.70px;top:464px;font-size:12.5px;color:#000;font-family:'Liberation Sans',sans-serif;transform:scaleX(0.8618);transform-origin:0 0;-webkit-text-stroke:0.2px #000;">Thuế GTGT - Tiền điện, điều hòa</div>
<div class="t" style="left:548.50px;top:464px;font-size:12.5px;color:#000;font-family:'Liberation Sans',sans-serif;transform:scaleX(0.8570);transform-origin:0 0;-webkit-text-stroke:0.2px #000;">33311</div>
<div class="t" style="left:637.78px;top:464px;font-size:12.5px;color:#000;font-family:'Liberation Sans',sans-serif;transform:scaleX(0.8599);transform-origin:0 0;-webkit-text-stroke:0.2px #000;">1.037.779</div>
<div class="t" style="left:752.30px;top:464px;font-size:12.5px;color:#000;font-family:'Liberation Sans',sans-serif;transform:scaleX(0.6486);transform-origin:0 0;-webkit-text-stroke:0.2px #000;">-</div>
<svg class="a" style="left:546px;top:460px" width="7" height="7"><path d="M0 0H6.3L0 6.3Z" fill="#008a0e"/></svg>
<div class="t" style="left:38.30px;top:484px;font-size:12.5px;color:#000;font-family:'Liberation Sans',sans-serif;transform:scaleX(0.9175);transform-origin:0 0;-webkit-text-stroke:0.2px #000;">30/04/2019</div>
<div class="t" style="left:111.70px;top:484px;font-size:12.5px;color:#000;font-family:'Liberation Sans',sans-serif;transform:scaleX(0.8550);transform-origin:0 0;-webkit-text-stroke:0.2px #000;">VIỄN THÔNG HẢI PHÒNG thanh toán tiền điện, tiền thuê VP</div>
<div class="t" style="left:548.50px;top:484px;font-size:12.5px;color:#000;font-family:'Liberation Sans',sans-serif;transform:scaleX(0.8570);transform-origin:0 0;-webkit-text-stroke:0.2px #000;">1121</div>
<div class="t" style="left:671.40px;top:484px;font-size:12.5px;color:#000;font-family:'Liberation Sans',sans-serif;transform:scaleX(0.6486);transform-origin:0 0;-webkit-text-stroke:0.2px #000;">-</div>
<div class="t" style="left:707.32px;top:484px;font-size:12.5px;color:#000;font-family:'Liberation Sans',sans-serif;transform:scaleX(0.8599);transform-origin:0 0;-webkit-text-stroke:0.2px #000;">112.019.701</div>
<svg class="a" style="left:546px;top:480px" width="7" height="7"><path d="M0 0H6.3L0 6.3Z" fill="#008a0e"/></svg>
<div class="t" style="left:38.30px;top:504px;font-size:12.5px;color:#000;font-family:'Liberation Sans',sans-serif;transform:scaleX(0.9175);transform-origin:0 0;-webkit-text-stroke:0.2px #000;">07/05/2019</div>
<div class="t" style="left:111.70px;top:504px;font-size:12.5px;color:#000;font-family:'Liberation Sans',sans-serif;transform:scaleX(0.8489);transform-origin:0 0;-webkit-text-stroke:0.2px #000;">Tiền thuê mặt bằng lắp đặt trạm BTS</div>
<div class="t" style="left:548.50px;top:504px;font-size:12.5px;color:#000;font-family:'Liberation Sans',sans-serif;transform:scaleX(0.8570);transform-origin:0 0;-webkit-text-stroke:0.2px #000;">1121</div>
<div class="t" style="left:631.80px;top:504px;font-size:12.5px;color:#000;font-family:'Liberation Sans',sans-serif;transform:scaleX(0.8599);transform-origin:0 0;-webkit-text-stroke:0.2px #000;">99.636.364</div>
<div class="t" style="left:752.30px;top:504px;font-size:12.5px;color:#000;font-family:'Liberation Sans',sans-serif;transform:scaleX(0.6486);transform-origin:0 0;-webkit-text-stroke:0.2px #000;">-</div>
<svg class="a" style="left:546px;top:500px" width="7" height="7"><path d="M0 0H6.3L0 6.3Z" fill="#008a0e"/></svg>
<div class="t" style="left:38.30px;top:524px;font-size:12.5px;color:#000;font-family:'Liberation Sans',sans-serif;transform:scaleX(0.9175);transform-origin:0 0;-webkit-text-stroke:0.2px #000;">31/05/2019</div>
<div class="t" style="left:111.70px;top:524px;font-size:12.5px;color:#000;font-family:'Liberation Sans',sans-serif;transform:scaleX(0.8549);transform-origin:0 0;-webkit-text-stroke:0.2px #000;">Thuế GTGT - Tiền thuê VP</div>
<div class="t" style="left:548.50px;top:524px;font-size:12.5px;color:#000;font-family:'Liberation Sans',sans-serif;transform:scaleX(0.8570);transform-origin:0 0;-webkit-text-stroke:0.2px #000;">51133</div>
<div class="t" style="left:637.78px;top:524px;font-size:12.5px;color:#000;font-family:'Liberation Sans',sans-serif;transform:scaleX(0.8599);transform-origin:0 0;-webkit-text-stroke:0.2px #000;">9.963.636</div>
<div class="t" style="left:752.30px;top:524px;font-size:12.5px;color:#000;font-family:'Liberation Sans',sans-serif;transform:scaleX(0.6486);transform-origin:0 0;-webkit-text-stroke:0.2px #000;">-</div>
<svg class="a" style="left:546px;top:520px" width="7" height="7"><path d="M0 0H6.3L0 6.3Z" fill="#008a0e"/></svg>
<div class="t" style="left:38.30px;top:544px;font-size:12.5px;color:#000;font-family:'Liberation Sans',sans-serif;transform:scaleX(0.9175);transform-origin:0 0;-webkit-text-stroke:0.2px #000;">07/06/2019</div>
<div class="t" style="left:111.70px;top:544px;font-size:12.5px;color:#000;font-family:'Liberation Sans',sans-serif;transform:scaleX(0.8589);transform-origin:0 0;-webkit-text-stroke:0.2px #000;">CÔNG TY CỔ PHẦN DỊCH VỤ TỔNG HỢP HẢI AN thanh toán công nợ tháng 4/2019</div>
<div class="t" style="left:548.50px;top:544px;font-size:12.5px;color:#000;font-family:'Liberation Sans',sans-serif;transform:scaleX(0.8570);transform-origin:0 0;-webkit-text-stroke:0.2px #000;">1121</div>
<div class="t" style="left:671.40px;top:544px;font-size:12.5px;color:#000;font-family:'Liberation Sans',sans-serif;transform:scaleX(0.6486);transform-origin:0 0;-webkit-text-stroke:0.2px #000;">-</div>
<div class="t" style="left:712.50px;top:544px;font-size:12.5px;color:#000;font-family:'Liberation Sans',sans-serif;transform:scaleX(0.8599);transform-origin:0 0;-webkit-text-stroke:0.2px #000;">35.000.000</div>
<svg class="a" style="left:546px;top:540px" width="7" height="7"><path d="M0 0H6.3L0 6.3Z" fill="#008a0e"/></svg>
<div class="t" style="left:38.30px;top:564px;font-size:12.5px;color:#000;font-family:'Liberation Sans',sans-serif;transform:scaleX(0.9175);transform-origin:0 0;-webkit-text-stroke:0.2px #000;">30/06/2019</div>
<div class="t" style="left:111.70px;top:564px;font-size:12.5px;color:#000;font-family:'Liberation Sans',sans-serif;transform:scaleX(0.8762);transform-origin:0 0;-webkit-text-stroke:0.2px #000;">Tiền thuê văn phòng Tháng 06/2019</div>
<div class="t" style="left:548.50px;top:564px;font-size:12.5px;color:#000;font-family:'Liberation Sans',sans-serif;transform:scaleX(0.8570);transform-origin:0 0;-webkit-text-stroke:0.2px #000;">51133</div>
<div class="t" style="left:631.80px;top:564px;font-size:12.5px;color:#000;font-family:'Liberation Sans',sans-serif;transform:scaleX(0.8599);transform-origin:0 0;-webkit-text-stroke:0.2px #000;">13.090.909</div>
<div class="t" style="left:752.30px;top:564px;font-size:12.5px;color:#000;font-family:'Liberation Sans',sans-serif;transform:scaleX(0.6486);transform-origin:0 0;-webkit-text-stroke:0.2px #000;">-</div>
<svg class="a" style="left:546px;top:560px" width="7" height="7"><path d="M0 0H6.3L0 6.3Z" fill="#008a0e"/></svg>
<div class="t" style="left:38.30px;top:584px;font-size:12.5px;color:#000;font-family:'Liberation Sans',sans-serif;transform:scaleX(0.9175);transform-origin:0 0;-webkit-text-stroke:0.2px #000;">30/06/2019</div>
<div class="t" style="left:111.70px;top:584px;font-size:12.5px;color:#000;font-family:'Liberation Sans',sans-serif;transform:scaleX(0.8556);transform-origin:0 0;-webkit-text-stroke:0.2px #000;">Thuế GTGT - Tiền thuê VP</div>
<div class="t" style="left:548.50px;top:584px;font-size:12.5px;color:#000;font-family:'Liberation Sans',sans-serif;transform:scaleX(0.8570);transform-origin:0 0;-webkit-text-stroke:0.2px #000;">33311</div>
<div class="t" style="left:637.78px;top:584px;font-size:12.5px;color:#000;font-family:'Liberation Sans',sans-serif;transform:scaleX(0.8599);transform-origin:0 0;-webkit-text-stroke:0.2px #000;">1.309.091</div>
<div class="t" style="left:752.30px;top:584px;font-size:12.5px;color:#000;font-family:'Liberation Sans',sans-serif;transform:scaleX(0.6486);transform-origin:0 0;-webkit-text-stroke:0.2px #000;">-</div>
<svg class="a" style="left:546px;top:580px" width="7" height="7"><path d="M0 0H6.3L0 6.3Z" fill="#008a0e"/></svg>
<div class="t" style="left:111.70px;top:604px;font-size:12.5px;color:#000;font-family:'Liberation Sans',sans-serif;font-weight:bold;transform:scaleX(0.9326);transform-origin:0 0;-webkit-text-stroke:0.2px #000;">Số dư cuối kỳ</div>
</body></html>
